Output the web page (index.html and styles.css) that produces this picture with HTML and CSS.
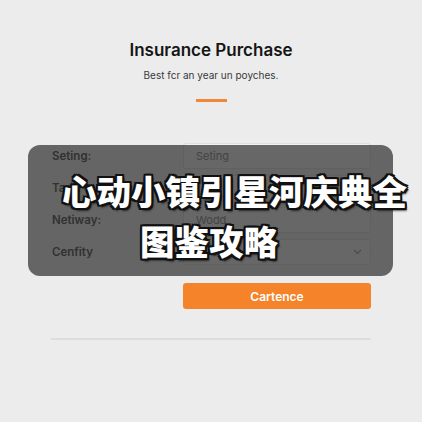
FILE: index.html
```html
<!DOCTYPE html>
<html lang="en">
<head>
    <meta charset="UTF-8">
    <meta name="viewport" content="width=device-width, initial-scale=1.0">
    <title>Insurance Purchase</title>
    <link rel="stylesheet" href="styles.css">
</head>
<body>
    <div class="page">
        <div class="header">
            <h1>Insurance Purchase</h1>
            <p class="subtitle">Best fcr an year un poyches.</p>
            <div class="accent"></div>
        </div>

        <div class="form-wrap">
            <form class="form">
                <div class="row">
                    <label>Seting:</label>
                    <div class="field">Seting</div>
                </div>
                <div class="row">
                    <label>Tarif:</label>
                    <div class="field"></div>
                </div>
                <div class="row">
                    <label>Netiway:</label>
                    <div class="field">Wodd</div>
                </div>
                <div class="row">
                    <label>Cenfity</label>
                    <div class="field select">
                        <span>Ctimes</span>
                        <svg width="9" height="6" viewBox="0 0 9 6"><path d="M1 1l3.5 3.5L8 1" fill="none" stroke="currentColor" stroke-width="1.1"/></svg>
                    </div>
                </div>
                <div class="row">
                    <span></span>
                    <button type="button" class="submit">Cartence</button>
                </div>
            </form>

            <!-- caption banner laid over the form -->
            <div class="caption">
                <span class="line-one">心动小镇引星河庆典全</span>
                <span class="line-two">图鉴攻略</span>
            </div>
        </div>

        <hr class="divider">
    </div>
</body>
</html>
```

FILE: styles.css
```css
body {
    margin: 0;
    background-color: #ececec;
    font-family: Inter, "Noto Sans", sans-serif;
    color: #1a1a1a;
}

.page {
    width: 422px;
    height: 422px;
    overflow: hidden;
}

.header {
    text-align: center;
    padding-top: 40px;
}

.header h1 {
    margin: 0;
    font-size: 17px;
    line-height: 20px;
    font-weight: 600;
    color: #151515;
}

.subtitle {
    margin: 8px 0 0;
    font-size: 10px;
    line-height: 14px;
    color: #3a3a3a;
}

.accent {
    width: 31px;
    height: 3px;
    margin: 17px auto 0;
    background-color: #f0883a;
}

.form-wrap {
    position: relative;
    margin: 41px 51px 0;
}

.form {
    display: flex;
    flex-direction: column;
    gap: 6px;
}

.row {
    display: grid;
    grid-template-columns: 132px 188px;
    align-items: center;
}

.row label {
    font-size: 11.5px;
    font-weight: 600;
    color: #505050;
    padding-left: 1px;
}

.field {
    height: 24px;
    border: 1px solid #dedede;
    border-radius: 3px;
    background-color: #f1f1f1;
    font-size: 11px;
    color: #888;
    padding: 0 8px 0 12px;
    display: flex;
    align-items: center;
}

.select {
    justify-content: space-between;
    color: #999;
}

.submit {
    margin-top: 12px;
    height: 26px;
    border: none;
    border-radius: 3px;
    background-color: #f5832a;
    color: #fff;
    font-family: Inter, "Noto Sans", sans-serif;
    font-size: 12px;
    font-weight: 600;
}

.caption {
    position: absolute;
    left: -23px;
    top: 2px;
    width: 365px;
    height: 131px;
    border-radius: 12px;
    background-color: rgba(34, 34, 34, 0.67);
}

.caption span {
    position: absolute;
    white-space: nowrap;
    font-family: "Noto Sans CJK SC", sans-serif;
    font-size: 34.5px;
    line-height: 50px;
    font-weight: 900;
    color: #fff;
    text-shadow:
        2px 0 0 #111, -2px 0 0 #111, 0 2px 0 #111, 0 -2px 0 #111,
        2px 2px 0 #111, -2px -2px 0 #111, 2px -2px 0 #111, -2px 2px 0 #111,
        2px 3px 2px rgba(0, 0, 0, 0.6);
}

.line-one {
    left: 34px;
    top: 20px;
}

.line-two {
    left: 112px;
    top: 70px;
}

.divider {
    margin: 29px 51px 0;
    border: none;
    height: 2px;
    background-color: #dddddd;
}
```
